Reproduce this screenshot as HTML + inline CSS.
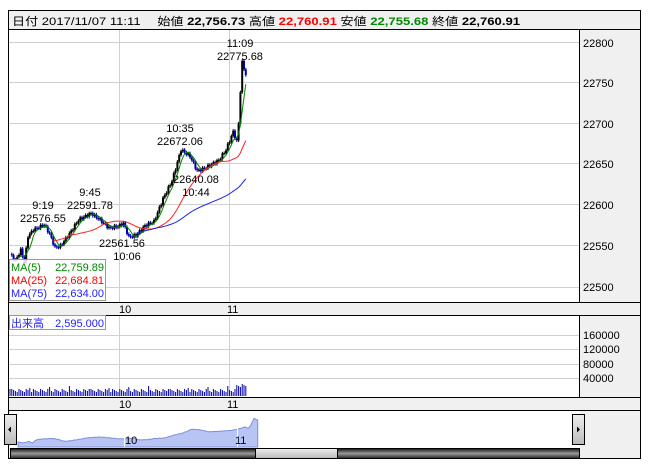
<!DOCTYPE html><html><head><meta charset="utf-8"><style>
body{margin:0;background:#fff;width:652px;height:469px;overflow:hidden;font-family:"Liberation Sans","Noto Sans CJK JP",sans-serif}
svg{position:absolute;left:0;top:0}
text{font-family:"Liberation Sans","Noto Sans CJK JP",sans-serif;font-size:11px}
</style></head><body>
<svg id="s" width="652" height="469" viewBox="0 0 652 469">
<rect x="8.5" y="10.5" width="632" height="448" fill="#f0f0f0" stroke="#000"/>
<rect x="9" y="30" width="570" height="272" fill="#fff"/>
<line x1="9" y1="29.5" x2="640" y2="29.5" stroke="#000"/>
<line x1="579.5" y1="30" x2="579.5" y2="302" stroke="#000"/>
<line x1="9" y1="302.5" x2="640" y2="302.5" stroke="#000"/>
<line x1="9" y1="315.5" x2="640" y2="315.5" stroke="#000"/>
<rect x="9" y="316" width="570" height="81" fill="#fff"/>
<line x1="579.5" y1="316" x2="579.5" y2="397" stroke="#000"/>
<line x1="9" y1="397.5" x2="640" y2="397.5" stroke="#000"/>
<line x1="9" y1="410.5" x2="640" y2="410.5" stroke="#000"/>
<rect x="10" y="411" width="570" height="37" fill="#fff"/>
<g stroke="#d0d0d0" id="grid"></g>
<text x="12" y="25" font-size="13" textLength="508" lengthAdjust="spacingAndGlyphs">日付 2017/11/07 11:11　 始値 <tspan font-weight="bold">22,756.73</tspan> 高値 <tspan fill="#f00" font-weight="bold">22,760.91</tspan> 安値 <tspan fill="#080" font-weight="bold">22,755.68</tspan> 終値 <tspan font-weight="bold">22,760.91</tspan></text>
<g id="g"></g>
<g font-size="11" text-anchor="middle">
<text x="240" y="47">11:09</text><text x="240" y="60">22775.68</text>
<text x="180" y="132">10:35</text><text x="180" y="145">22672.06</text>
<text x="196" y="183">22640.08</text><text x="196" y="196">10:44</text>
<text x="43" y="209">9:19</text><text x="43" y="222">22576.55</text>
<text x="90" y="196">9:45</text><text x="90" y="209">22591.78</text>
<text x="122" y="247">22561.56</text><text x="127" y="260">10:06</text>
</g>
<g font-size="11"><text x="583" y="47">22800</text><text x="583" y="87">22750</text><text x="583" y="128">22700</text><text x="583" y="168">22650</text><text x="583" y="209">22600</text><text x="583" y="250">22550</text><text x="583" y="291">22500</text>
<text x="583" y="339">160000</text><text x="583" y="353">120000</text><text x="583" y="368">80000</text><text x="583" y="382">40000</text>
<text x="119" y="313">10</text><text x="227" y="313">11</text><text x="119" y="408">10</text><text x="227" y="408">11</text></g>
<rect x="9.5" y="259.5" width="96" height="41" fill="#fff" fill-opacity="0.85" stroke="#999"/>
<text x="11" y="271" fill="#080">MA(5)</text><text x="104" y="271" fill="#080" text-anchor="end">22,759.89</text>
<text x="11" y="284" fill="#f00">MA(25)</text><text x="104" y="284" fill="#f00" text-anchor="end">22,684.81</text>
<text x="11" y="297" fill="#22f">MA(75)</text><text x="104" y="297" fill="#22f" text-anchor="end">22,634.00</text>
<rect x="9.5" y="315.5" width="96" height="14" fill="#fff" stroke="#999"/>
<text x="11" y="327" fill="#22f">出来高</text><text x="104" y="327" fill="#22f" text-anchor="end">2,595.000</text>
<g id="nav"></g>
<text x="125" y="444" font-size="10">10</text><text x="235" y="444" font-size="10">11</text>
<defs><linearGradient id="dk" x1="0" y1="0" x2="0" y2="1"><stop offset="0" stop-color="#111"/><stop offset=".5" stop-color="#999"/><stop offset="1" stop-color="#222"/></linearGradient>
<linearGradient id="lt" x1="0" y1="0" x2="0" y2="1"><stop offset="0" stop-color="#eee"/><stop offset="1" stop-color="#bbb"/></linearGradient></defs>
<rect x="10.5" y="448.5" width="569" height="10" fill="url(#dk)" stroke="#000"/>
<rect x="255.5" y="448.5" width="82" height="10" fill="url(#lt)" stroke="#000"/>
<rect x="4.5" y="414.5" width="12" height="30" fill="url(#lt)" stroke="#000"/><path d="M8 429.5l3-3v6z"/>
<rect x="572.5" y="414.5" width="12" height="30" fill="url(#lt)" stroke="#000"/><path d="M580 429.5l-3-3v6z"/>
</svg>
<script>
var G=document.getElementById('grid'),h='';
[42,82,123,163,204,245,287].forEach(function(y){h+='<line x1="9" x2="579" y1="'+(y+.5)+'" y2="'+(y+.5)+'"/>'});
[335,349,364,378].forEach(function(y){h+='<line x1="9" x2="579" y1="'+(y+.5)+'" y2="'+(y+.5)+'"/>'});
[119.5,229.5].forEach(function(x){h+='<line y1="30" y2="302" x1="'+x+'" x2="'+x+'"/><line y1="316" y2="397" x1="'+x+'" x2="'+x+'"/>'});
G.innerHTML=h;
var K=[[0,22540],[3,22532],[6,22545],[8,22530],[10,22562],[13,22570],[19,22576],[22,22565],[25,22548],[28,22550],[33,22565],[38,22582],[45,22590],[50,22582],[55,22572],[60,22574],[63,22578],[66,22561],[70,22563],[75,22575],[80,22580],[85,22608],[90,22630],[95,22668],[100,22660],[104,22642],[108,22645],[112,22650],[116,22655],[120,22668],[124,22690],[126,22678],[127,22700],[128,22740],[129,22775],[131,22760]];
var P=[];for(var m=0;m<=131;m++){for(var i=0;i<K.length-1&&K[i+1][0]<m;i++);var a=K[i],b=K[Math.min(i+1,K.length-1)];var t=b[0]==a[0]?0:(m-a[0])/(b[0]-a[0]);P.push(a[1]+(b[1]-a[1])*t+Math.sin(m*2.3)*2);}
function X(m){return 10+m*1.8}function Y(p){return 42+(22800-p)*0.816}
var s='';
for(var m=1;m<P.length;m++){var o=P[m-1],c=P[m],hi=Math.max(o,c)+2,lo=Math.min(o,c)-2,col=c>=o?'#000':'#00a';
s+='<line x1="'+X(m)+'" x2="'+X(m)+'" y1="'+Y(hi)+'" y2="'+Y(lo)+'" stroke="'+col+'"/><rect x="'+(X(m)-1)+'" y="'+Y(Math.max(o,c))+'" width="2" height="'+Math.max(1,Math.abs(o-c)*0.816)+'" fill="'+col+'"/>';}
function ma(n,col){var d='';for(var m=n-1;m<P.length;m++){var q=0;for(var j=0;j<n;j++)q+=P[m-j];q/=n;d+=(d?'L':'M')+X(m).toFixed(1)+' '+Y(q).toFixed(1)}s+='<path d="'+d+'" fill="none" stroke="'+col+'"/>'}
ma(5,'#080');ma(25,'#f22');ma(72,'#22e');
for(var m=0;m<P.length;m++){var v=4+((m*7)%4)+(m%11==0?3:0)+(m>125?5:0);s+='<line x1="'+X(m)+'" x2="'+X(m)+'" y1="396" y2="'+(396-v)+'" stroke="#00a"/>'}
document.getElementById('g').innerHTML=s;
var d='M18 447';for(var m=0;m<P.length;m++){d+='L'+(18+m*1.83).toFixed(1)+' '+(444-(P[m]-22520)*0.1).toFixed(1)}d+='L'+(18+131*1.83)+' 447Z';
document.getElementById('nav').innerHTML='<path d="'+d+'" fill="#b8c4f4" stroke="#8090d8"/><line x1="124.5" x2="124.5" y1="415" y2="447" stroke="#fff"/><line x1="237.5" x2="237.5" y1="415" y2="447" stroke="#fff"/>';
</script>
</body></html>
